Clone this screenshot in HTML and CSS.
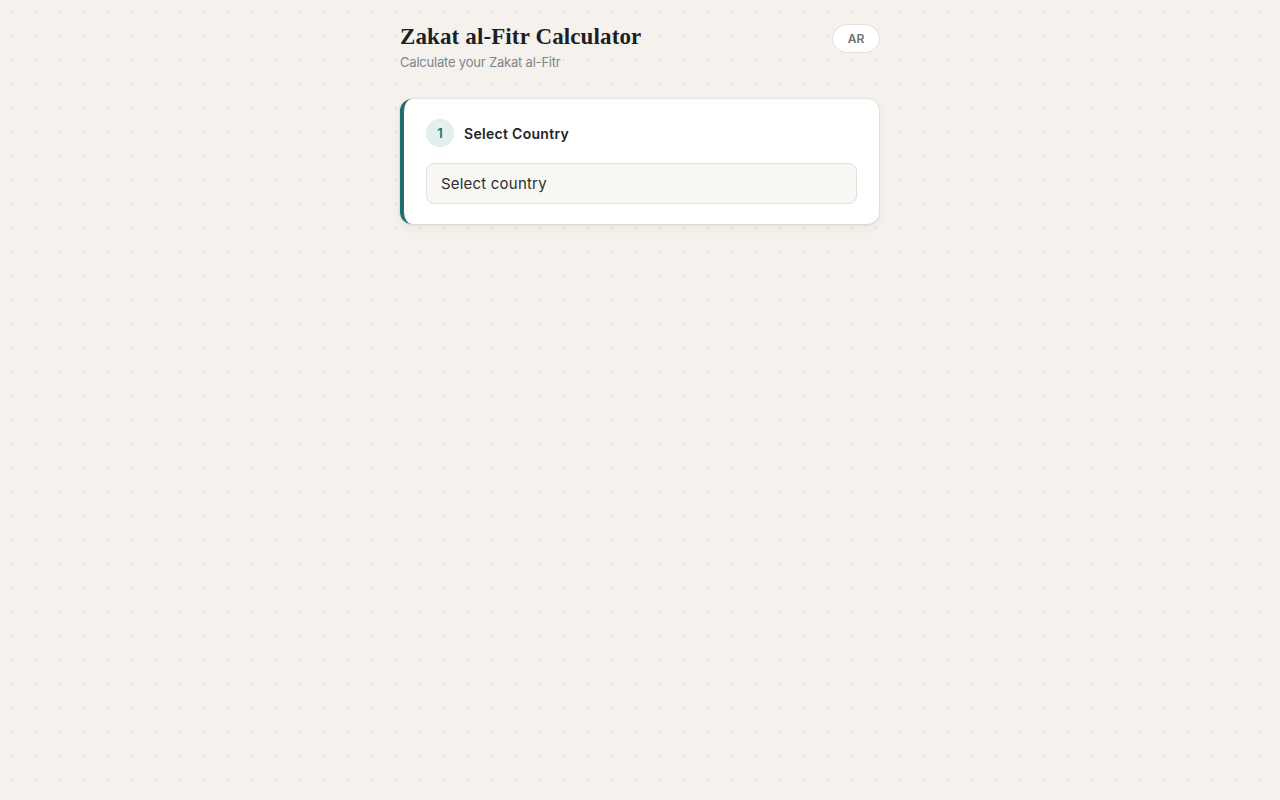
FILE: index.html
```html
<!DOCTYPE html>
<html lang="en">
<head>
<meta charset="utf-8">
<title>Zakat al-Fitr Calculator</title>
<link rel="stylesheet" href="styles.css">
</head>
<body>
<main class="wrap">
  <header class="head">
    <div class="titles">
      <h1 class="title">Zakat al-Fitr Calculator</h1>
      <p class="subtitle">Calculate your Zakat al-Fitr</p>
    </div>
    <button class="lang">AR</button>
  </header>
  <section class="card">
    <div class="step">
      <span class="num">1</span>
      <span class="step-title">Select Country</span>
    </div>
    <div class="select">Select country</div>
  </section>
</main>
</body>
</html>
```

FILE: styles.css
```css
* { box-sizing: border-box; }
html, body { margin: 0; padding: 0; }
body {
  background-color: #f5f2ed;
  background-image: radial-gradient(circle at 12px 12px, #e6e1da 1px, transparent 1.5px);
  background-size: 24px 24px;
  min-height: 800px;
  font-family: Inter, "Noto Sans", sans-serif;
  color: #1f2328;
}
.wrap {
  width: 480px;
  margin: 0 auto;
  padding-top: 24px;
}
.head {
  display: flex;
  justify-content: space-between;
  align-items: flex-start;
}
.title {
  margin: 0;
  font-family: "Liberation Serif", "DejaVu Serif", serif;
  font-weight: 700;
  font-size: 23px;
  line-height: 26px;
  letter-spacing: 0.12px;
  color: #1c1f24;
}
.subtitle {
  margin: 4px 0 0;
  font-size: 13px;
  line-height: 16px;
  color: #80848b;
  letter-spacing: -0.2px;
}
.lang {
  width: 48px;
  height: 29px;
  border: 1px solid #e3dfd9;
  background: #fff;
  border-radius: 15px;
  font-family: Inter, sans-serif;
  font-weight: 600;
  font-size: 12px;
  color: #6b7078;
  padding: 0;
}
.card {
  margin-top: 29px;
  width: 479px;
  background: #fff;
  border-radius: 12px;
  border-left: 4px solid #1f6f6c;
  box-shadow: 0 1px 3px rgba(60,50,40,0.08), 0 0 0 1px rgba(60,50,40,0.05), 0 4px 12px rgba(60,50,40,0.05);
  padding: 20px 22px 20px 22px;
  height: 125px;
}
.step {
  display: flex;
  align-items: center;
  gap: 10px;
}
.num {
  width: 28px;
  height: 28px;
  border-radius: 50%;
  background: #e3eeee;
  color: #1f6f6c;
  font-size: 13px;
  font-weight: 600;
  display: flex;
  align-items: center;
  justify-content: center;
}
.step-title {
  font-size: 14px;
  font-weight: 600;
  letter-spacing: 0.3px;
  color: #1f2328;
}
.select {
  margin-top: 16px;
  height: 41px;
  border: 1px solid #e4dfd8;
  background: #f9f7f4;
  border-radius: 8px;
  padding: 0 14px;
  display: flex;
  align-items: center;
  font-size: 15px;
  letter-spacing: 0.2px;
  color: #2a2d33;
}
```
